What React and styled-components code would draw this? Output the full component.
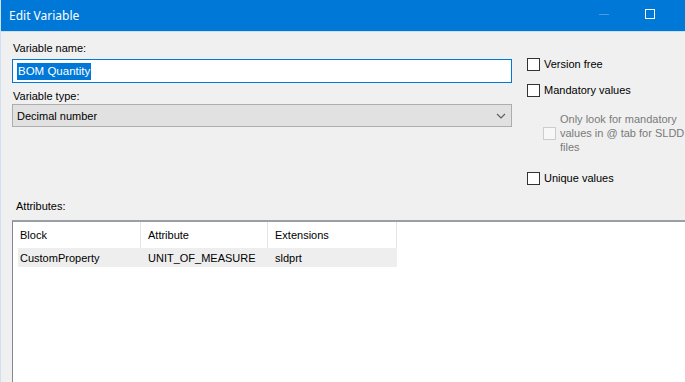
import React from "react";
import styled, { createGlobalStyle } from "styled-components";

const Global = createGlobalStyle`
  html, body { margin: 0; padding: 0; overflow: hidden; background: #f0f0f0; }
  body { font-family: "Liberation Sans", Arial, sans-serif; font-size: 11px; color: #000; }
  * { box-sizing: border-box; }
`;

const Window = styled.div`
  width: 685px;
  height: 382px;
  display: flex;
  flex-direction: column;
  background: #f0f0f0;
  border-left: 1px solid #cfe0f3;
  overflow: hidden;
`;

const TitleBar = styled.div`
  height: 32px;
  flex: none;
  display: flex;
  align-items: center;
  background: #0078d7;
  border-bottom: 1px solid #cde0f4;
  margin-left: -1px;
  padding-right: 12px;
`;

const Title = styled.div`
  flex: 1;
  padding-left: 9px;
  padding-bottom: 1px;
  color: #fff;
  font-family: "Noto Sans", "Liberation Sans", sans-serif;
  font-size: 12px;
`;

const CaptionButton = styled.div`
  width: 46px;
  height: 31px;
  display: flex;
  align-items: center;
  justify-content: center;
`;

const MinGlyph = styled.span`
  width: 10px;
  height: 1px;
  background: #4c9be3;
  margin-bottom: 2px;
`;

const MaxGlyph = styled.span`
  width: 10px;
  height: 10px;
  border: 1px solid #fff;
  margin-bottom: 3px;
`;

const Body = styled.div`
  flex: 1;
  min-height: 0;
  display: flex;
  flex-direction: column;
  padding: 10px 0 0 11px;
`;

const Top = styled.div`
  display: flex;
  gap: 15px;
`;

const LeftCol = styled.div`
  width: 500px;
  display: flex;
  flex-direction: column;
`;

const Label = styled.div`
  line-height: 13px;
  height: 13px;
  margin: ${(p) => p.$mt || 0}px 0 ${(p) => p.$mb || 0}px ${(p) => p.$ml || 0}px;
`;

const TextBox = styled.div`
  height: 24px;
  border: 1px solid #0078d7;
  background: #fff;
  display: flex;
  align-items: center;
  padding-left: 4px;
`;

const Selected = styled.span`
  background: #0078d7;
  color: #fff;
  line-height: 17px;
  padding: 0 1px;
  font-size: 11.5px;
`;

const Select = styled.div`
  height: 23px;
  border: 1px solid #adadad;
  background: #e1e1e1;
  display: flex;
  align-items: center;
  padding: 0 4px 0 4px;
  justify-content: space-between;
`;

const RightCol = styled.div`
  display: flex;
  flex-direction: column;
  padding-top: 15px;
`;

const CheckRow = styled.div`
  display: flex;
  align-items: center;
  gap: 4px;
  margin: ${(p) => p.$mt || 0}px 0 0 ${(p) => p.$indent || 0}px;
  color: ${(p) => (p.$disabled ? "#7a7a7a" : "#000")};
`;

const Box = styled.span`
  width: 13px;
  height: 13px;
  flex: none;
  border: 1px solid ${(p) => (p.$disabled ? "#cccccc" : "#333333")};
  background: ${(p) => (p.$disabled ? "#f7f7f7" : "#fff")};
`;

const CheckText = styled.span`
  line-height: 14px;
`;

const List = styled.div`
  flex: 1;
  margin-top: 7px;
  background: #fff;
  border-top: 2px solid #9a9ea6;
  border-left: 1px solid #828790;
  display: flex;
  flex-direction: column;
`;

const HeaderRow = styled.div`
  display: flex;
  height: 26px;
`;

const HeaderCell = styled.div`
  width: ${(p) => p.$w}px;
  padding-left: 7px;
  display: flex;
  align-items: center;
  border-right: 1px solid #e5e5e5;
`;

const DataRow = styled.div`
  display: flex;
  height: 19px;
  margin-left: 5px;
  width: 379px;
  background: #eeeeee;
  align-items: center;
`;

const DataCell = styled.div`
  width: ${(p) => p.$w}px;
  padding-left: ${(p) => p.$pl}px;
  white-space: nowrap;
`;

const Spacer = styled.div`
  height: ${(p) => p.$h}px;
`;

export default function App() {
  return (
    <>
      <Global />
      <Window>
        <TitleBar>
          <Title>Edit Variable</Title>
          <CaptionButton>
            <MinGlyph />
          </CaptionButton>
          <CaptionButton>
            <MaxGlyph />
          </CaptionButton>
        </TitleBar>
        <Body>
          <Top>
            <LeftCol>
              <Label $ml={1}>Variable name:</Label>
              <Spacer $h={4} />
              <TextBox>
                <Selected>BOM Quantity</Selected>
              </TextBox>
              <Label $mt={7} $mb={1} $ml={1}>Variable type:</Label>
              <Select>
                <span>Decimal number</span>
                <svg width="10" height="6" viewBox="0 0 10 6" style={{ marginRight: 1 }}>
                  <path d="M1 1 L5 5 L9 1" fill="none" stroke="#606060" strokeWidth="1.2" />
                </svg>
              </Select>
            </LeftCol>
            <RightCol>
              <CheckRow>
                <Box />
                <CheckText>Version free</CheckText>
              </CheckRow>
              <CheckRow $mt={12}>
                <Box />
                <CheckText>Mandatory values</CheckText>
              </CheckRow>
              <CheckRow $mt={15} $indent={16} $disabled>
                <Box $disabled />
                <CheckText>
                  Only look for mandatory
                  <br />
                  values in @ tab for SLDD
                  <br />
                  files
                </CheckText>
              </CheckRow>
              <CheckRow $mt={17}>
                <Box />
                <CheckText>Unique values</CheckText>
              </CheckRow>
            </RightCol>
          </Top>
          <Label $mt={15} $ml={4}>Attributes:</Label>
          <List>
            <HeaderRow>
              <HeaderCell $w={128}>Block</HeaderCell>
              <HeaderCell $w={127}>Attribute</HeaderCell>
              <HeaderCell $w={129}>Extensions</HeaderCell>
            </HeaderRow>
            <DataRow>
              <DataCell $w={123} $pl={2}>CustomProperty</DataCell>
              <DataCell $w={127} $pl={7}>UNIT_OF_MEASURE</DataCell>
              <DataCell $w={129} $pl={7}>sldprt</DataCell>
            </DataRow>
          </List>
        </Body>
      </Window>
    </>
  );
}
